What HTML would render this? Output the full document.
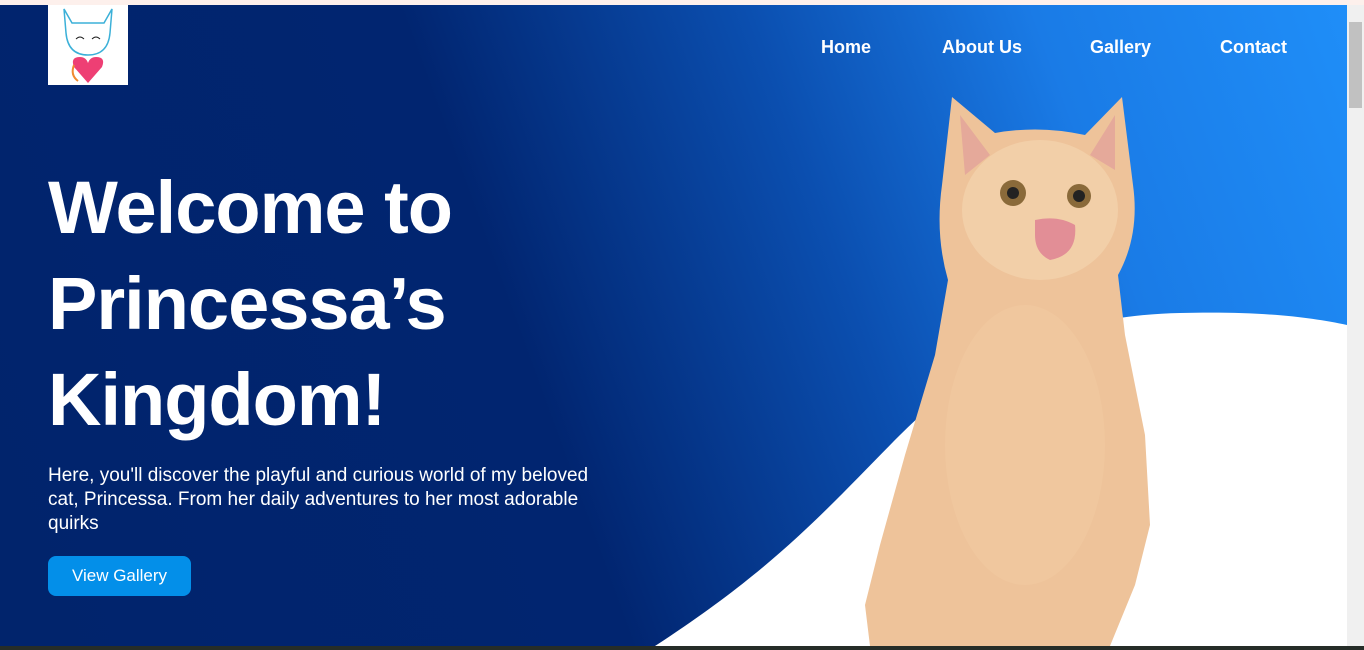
<!DOCTYPE html>
<html><head><style>
*{margin:0;padding:0;box-sizing:border-box}
body{width:1364px;height:650px;overflow:hidden;font-family:"Liberation Sans",Arial,sans-serif;background:#f0f0f0;position:relative}
.top{position:absolute;left:0;top:0;width:1364px;height:5px;background:#fdf0ec}
.hero{position:absolute;left:0;top:5px;width:1347px;height:641px;background:linear-gradient(70deg,#01246c 0%,#012570 40%,#0b4fb0 62%,#1a7be6 80%,#1f8ef8 100%);overflow:hidden}
.sb{position:absolute;left:1347px;top:5px;width:17px;height:641px;background:#f0f0f0}
.sb .th{position:absolute;left:2px;top:17px;width:13px;height:86px;background:#c1c1c1}
.bottom{position:absolute;left:0;top:646px;width:1364px;height:4px;background:#262d28}
.logo{position:absolute;left:48px;top:0;width:80px;height:80px;background:#fff}
nav a{position:absolute;top:37px;color:#fff;font-weight:bold;font-size:18px;text-decoration:none}
h1{position:absolute;left:48px;top:160px;color:#fff;font-size:74px;line-height:96px;font-weight:bold;letter-spacing:-1px}
p{position:absolute;left:48px;top:464px;width:570px;color:#fff;font-size:19px;line-height:24px}
.btn{position:absolute;left:48px;top:556px;width:143px;height:40px;background:#038fe9;border-radius:8px;color:#fff;font-size:17px;text-align:center;line-height:40px}
</style></head><body>
<div class="top"></div>
<div class="hero">
<svg width="1347" height="641" style="position:absolute;left:0;top:0">
<path d="M655 641 C780 560 830 500 900 430 C990 340 1080 310 1180 308 C1260 306 1310 312 1347 320 L1347 641 Z" fill="#fff"/>
<path d="M952 92 L995 128 Q1040 120 1085 130 L1122 92 L1133 180 Q1140 230 1118 270 L1125 330 L1145 430 L1150 520 L1135 580 L1110 641 L870 641 L865 600 L880 540 L905 450 L935 350 L948 275 Q935 230 942 180 Z" fill="#eec39a"/>
<ellipse cx="1040" cy="205" rx="78" ry="70" fill="#f2cfa8"/>
<ellipse cx="1025" cy="440" rx="80" ry="140" fill="#f0c79e"/>
<path d="M960 110 L990 150 L965 170Z M1115 110 L1090 150 L1115 165Z" fill="#e5a99a"/>
<circle cx="1013" cy="188" r="13" fill="#8a6a3a"/><circle cx="1079" cy="191" r="12" fill="#8a6a3a"/>
<circle cx="1013" cy="188" r="6" fill="#222"/><circle cx="1079" cy="191" r="6" fill="#222"/>
<path d="M1035 215 Q1058 210 1075 220 Q1078 250 1050 255 Q1035 248 1035 230Z" fill="#e28e96"/>
</svg>
<div class="logo">
<svg width="80" height="80"><path d="M16 4 L24 18 L56 18 L64 4 L62 28 Q60 50 40 50 Q20 50 18 28Z" fill="none" stroke="#3bb0d8" stroke-width="1.5"/>
<path d="M28 34 q4 -4 8 0 M44 34 q4 -4 8 0" stroke="#222" fill="none"/>
<path d="M40 78 L26 62 Q22 52 32 52 Q38 52 40 58 Q42 52 48 52 Q58 52 54 62Z" fill="#ee3f74"/>
<path d="M26 60 Q22 70 30 76" stroke="#f08a30" fill="none" stroke-width="2"/></svg>
</div>
</div>
<nav><a style="left:821px">Home</a><a style="left:942px">About Us</a><a style="left:1090px">Gallery</a><a style="left:1220px">Contact</a></nav>
<h1>Welcome to<br>Princessa’s<br>Kingdom!</h1>
<p>Here, you'll discover the playful and curious world of my beloved cat, Princessa. From her daily adventures to her most adorable quirks</p>
<div class="btn">View Gallery</div>
<div class="sb"><div class="th"></div></div>
<div class="bottom"></div>
</body></html>
